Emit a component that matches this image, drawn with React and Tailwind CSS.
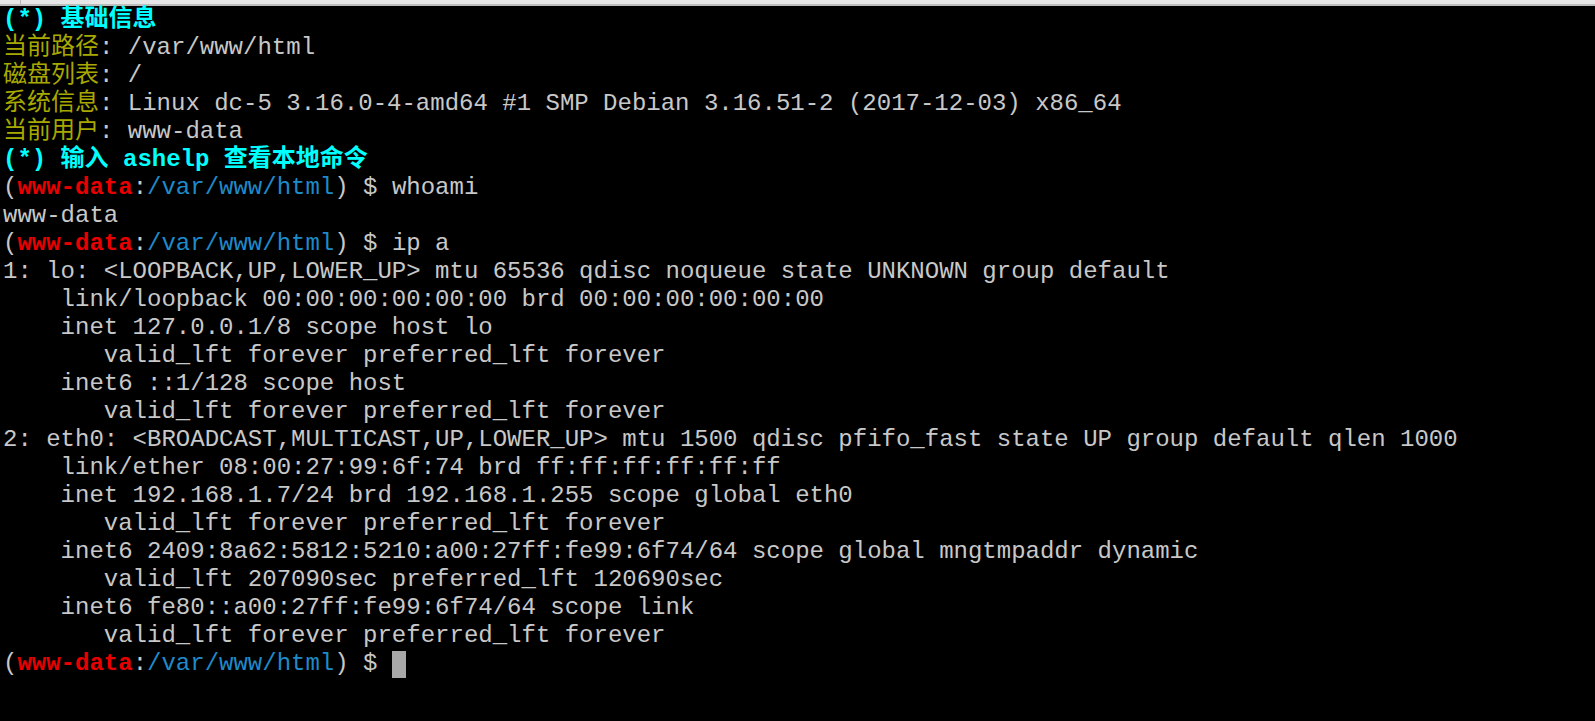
import React from "react";

const mono = "font-['Liberation_Mono','Noto_Sans_CJK_SC',monospace]";

const Label = ({ children }) => <span className="text-[#a8a800]">{children}</span>;
const Head = ({ children }) => <span className="font-bold text-[#00ffff]">{children}</span>;

const Prompt = () => (
  <>
    (<span className="font-bold text-[#e80000]">www-data</span>:
    <span className="text-[#1f8ac9]">/var/www/html</span>) ${" "}
  </>
);

const output = [
  "1: lo: <LOOPBACK,UP,LOWER_UP> mtu 65536 qdisc noqueue state UNKNOWN group default",
  "    link/loopback 00:00:00:00:00:00 brd 00:00:00:00:00:00",
  "    inet 127.0.0.1/8 scope host lo",
  "       valid_lft forever preferred_lft forever",
  "    inet6 ::1/128 scope host",
  "       valid_lft forever preferred_lft forever",
  "2: eth0: <BROADCAST,MULTICAST,UP,LOWER_UP> mtu 1500 qdisc pfifo_fast state UP group default qlen 1000",
  "    link/ether 08:00:27:99:6f:74 brd ff:ff:ff:ff:ff:ff",
  "    inet 192.168.1.7/24 brd 192.168.1.255 scope global eth0",
  "       valid_lft forever preferred_lft forever",
  "    inet6 2409:8a62:5812:5210:a00:27ff:fe99:6f74/64 scope global mngtmpaddr dynamic",
  "       valid_lft 207090sec preferred_lft 120690sec",
  "    inet6 fe80::a00:27ff:fe99:6f74/64 scope link",
  "       valid_lft forever preferred_lft forever",
];

export default function App() {
  return (
    <div className="w-[1595px] h-[721px] bg-black overflow-hidden flex flex-col">
      {/* window chrome strip */}
      <div className="h-[4px] bg-[#e6e6e6] flex shrink-0">
        <div className="w-[21px] border-r border-[#b8b8b8]" />
      </div>
      <div className="h-[2px] bg-[#bdbdbd] shrink-0" />

      <div className={`${mono} text-[24px] leading-[28px] text-[#c8c8c8] whitespace-pre pl-[3px]`}>
        <div><Head>(*) 基础信息</Head></div>
        <div><Label>当前路径</Label>: /var/www/html</div>
        <div><Label>磁盘列表</Label>: /</div>
        <div><Label>系统信息</Label>: Linux dc-5 3.16.0-4-amd64 #1 SMP Debian 3.16.51-2 (2017-12-03) x86_64</div>
        <div><Label>当前用户</Label>: www-data</div>
        <div><Head>(*) 输入 ashelp 查看本地命令</Head></div>
        <div><Prompt />whoami</div>
        <div>www-data</div>
        <div><Prompt />ip a</div>
        {output.map((line, i) => (
          <div key={i}>{line}</div>
        ))}
        <div className="flex items-center">
          <span><Prompt /></span>
          <span className="inline-block w-[14px] h-[27px] bg-[#a8a8a8]" />
        </div>
      </div>
    </div>
  );
}
